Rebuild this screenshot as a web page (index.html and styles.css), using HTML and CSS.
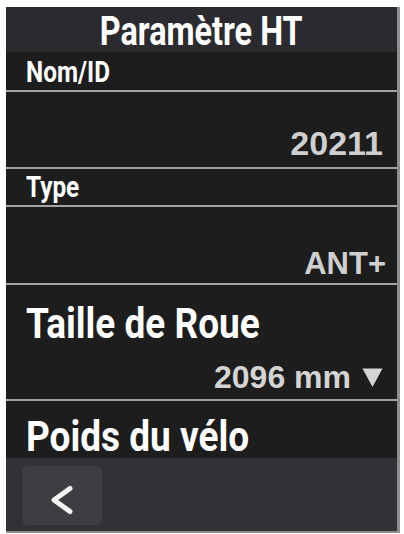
FILE: index.html
```html
<!DOCTYPE html>
<html lang="fr">
<head>
<meta charset="utf-8">
<title>Paramètre HT</title>
<link rel="stylesheet" href="styles.css">
</head>
<body>
<div class="screen">
  <div class="header"><span class="cond title">Paramètre HT</span></div>
  <div class="row r-nom"><span class="cond label-sm">Nom/ID</span></div>
  <div class="sep"></div>
  <div class="row value-row r-id"><span class="value">20211</span></div>
  <div class="sep"></div>
  <div class="row r-type"><span class="cond label-sm">Type</span></div>
  <div class="sep"></div>
  <div class="row value-row r-ant"><span class="value value-ant">ANT+</span></div>
  <div class="sep"></div>
  <div class="row r-wheel">
    <span class="cond label-lg">Taille de Roue</span>
    <span class="value value-wheel">2096 mm<svg class="tri" width="21" height="21" viewBox="0 0 21 21"><polygon points="0.5,1.5 20.5,1.5 10.5,20" fill="#d4d4d4"/></svg></span>
  </div>
  <div class="sep"></div>
  <div class="row r-weight"><span class="cond label-lg">Poids du vélo</span></div>
  <div class="footer">
    <div class="back">
      <svg width="80" height="59" viewBox="0 0 80 59"><polyline points="48,22.5 32,34 48,45.5" fill="none" stroke="#f2f2f2" stroke-width="5" stroke-linecap="round" stroke-linejoin="round"/></svg>
    </div>
  </div>
</div>
</body>
</html>
```

FILE: styles.css
```css
html, body {
  margin: 0;
  padding: 0;
  background: #ffffff;
}
body {
  width: 404px;
  height: 534px;
  overflow: hidden;
}
.screen {
  margin: 7px 0 0 6px;
  width: 391px;
  height: 524px;
  background: #1d1d1d;
  border-right: 3px solid #8e8e8e;
  border-bottom: 2px solid #8e8e8e;
  display: flex;
  flex-direction: column;
  overflow: hidden;
}
.cond {
  font-family: Roboto, "Liberation Sans", sans-serif;
  font-weight: bold;
  color: #ffffff;
  display: inline-block;
  white-space: nowrap;
  transform: scaleX(0.84);
  transform-origin: left center;
}
.header {
  height: 45px;
  flex: none;
  background: #2b2b2f;
  display: flex;
  justify-content: center;
  box-sizing: border-box;
  padding-top: 5px;
}
.title {
  font-size: 40px;
  line-height: 40px;
  transform-origin: center center;
  transform: scaleX(0.81);
}
.row {
  flex: none;
  box-sizing: border-box;
  display: flex;
  flex-direction: column;
  align-items: flex-start;
  padding: 0 14px 0 20px;
}
.sep {
  flex: none;
  height: 2px;
  background: #a4a4a4;
}
.r-nom { height: 38px; padding-top: 6px; }
.r-type { height: 36px; padding-top: 4px; }
.label-sm {
  font-size: 29px;
  line-height: 29px;
}
.value-row {
  justify-content: flex-end;
  align-items: flex-end;
}
.r-id { height: 75px; padding-bottom: 7px; }
.r-ant { height: 76px; padding-bottom: 4px; padding-right: 11px; }
.value {
  font-family: "Liberation Sans", Arial, sans-serif;
  font-weight: bold;
  font-size: 34px;
  line-height: 34px;
  color: #cfcfcf;
}
.value-ant { font-size: 31px; line-height: 31px; }
.r-wheel {
  height: 114px;
  padding-top: 17px;
  padding-bottom: 6px;
  justify-content: space-between;
}
.label-lg {
  font-size: 43px;
  line-height: 43px;
  transform: scaleX(0.86);
}
.value-wheel {
  align-self: flex-end;
  font-size: 32px;
  line-height: 32px;
  color: #d4d4d4;
  display: flex;
  align-items: center;
  gap: 11px;
}
.tri { display: block; flex: none; }
.r-weight { height: 57px; padding-top: 14px; }
.footer {
  flex: 1;
  background: #323236;
  padding: 8px 0 0 16px;
}
.back {
  width: 80px;
  height: 59px;
  border-radius: 6px;
  background: #3e3e42;
}
.back svg { display: block; }
```
